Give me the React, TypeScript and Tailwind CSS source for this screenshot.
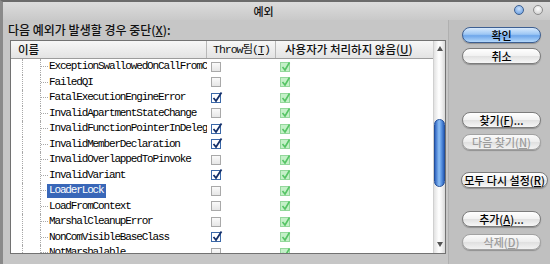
import React from "react"

const rows: [string, boolean][] = [
  ["ExceptionSwallowedOnCallFromCom", false],
  ["FailedQI", false],
  ["FatalExecutionEngineError", true],
  ["InvalidApartmentStateChange", false],
  ["InvalidFunctionPointerInDelegate", true],
  ["InvalidMemberDeclaration", true],
  ["InvalidOverlappedToPinvoke", false],
  ["InvalidVariant", true],
  ["LoaderLock", false],
  ["LoadFromContext", false],
  ["MarshalCleanupError", false],
  ["NonComVisibleBaseClass", true],
  ["NotMarshalable", false],
]

const ko = { fontFamily: '"Noto Sans CJK KR", "Noto Sans", sans-serif' }
const mono = { fontFamily: '"Liberation Mono", "Noto Sans CJK KR", monospace' }

function ThrowBox({ checked }: { checked: boolean }) {
  if (!checked)
    return <div className="w-[10px] h-[10px] border border-[#a9a9a9] bg-[linear-gradient(to_bottom,#fafafa,#e6e6e6)]" />
  return (
    <div className="relative w-[10px] h-[10px] border border-[#3b68a8] bg-white">
      <svg className="absolute -top-[3px] left-0" width="11" height="12" viewBox="0 0 11 12">
        <path d="M1.5 7 L4 10 L9.5 1.5" fill="none" stroke="#14306b" strokeWidth="1.8" />
      </svg>
    </div>
  )
}

function GreenBox() {
  return (
    <div className="relative w-[10px] h-[10px] border border-[#94d89c] bg-[#c4f0c8]">
      <svg className="absolute -top-[2px] left-0" width="10" height="11" viewBox="0 0 10 11">
        <path d="M1.5 6 L4 9 L8.5 1.5" fill="none" stroke="#56c465" strokeWidth="1.6" />
      </svg>
    </div>
  )
}

function AquaButton({ label, variant = "normal", wide = false }: { label: React.ReactNode; variant?: "default" | "normal" | "disabled"; wide?: boolean }) {
  const base = "h-[16px] rounded-full flex items-center justify-center text-[11px] font-medium leading-none border shadow-[0_1px_1px_rgba(0,0,0,0.25)]"
  const v =
    variant === "default"
      ? "border-[#3d5f92] bg-[linear-gradient(to_bottom,#d9eafc,#9cc6f4_45%,#6ea6ea_55%,#b4d8fb)] text-black"
      : variant === "disabled"
        ? "border-[#a2a2a2] bg-[linear-gradient(to_bottom,#fbfbfb,#ececec_50%,#e0e0e0_52%,#f2f2f2)] text-[#9c9c9c]"
        : "border-[#7c7c7c] bg-[linear-gradient(to_bottom,#ffffff,#f1f1f1_50%,#e1e1e1_52%,#f7f7f7)] text-black"
  return (
    <div className={`${base} ${v} ${wide ? "w-[87px]" : "w-[79px]"}`} style={ko}>
      {label}
    </div>
  )
}

function U({ c }: { c: string }) {
  return <span className="underline underline-offset-1">{c}</span>
}

export default function App() {
  return (
    <div className="w-[550px] h-[264px] overflow-hidden flex flex-col bg-[#c6c6c6] border-l-[3px] border-[#8a8a8a] border-t-2 border-t-[#6b6b6b]">
      <div className="h-[18px] shrink-0 flex items-center bg-[linear-gradient(to_bottom,#dcdcdc,#c9c9c9)]">
        <div className="flex-1 text-center text-[11px] font-medium pl-[10px] text-[#111]" style={ko}>예외</div>
        <div className="flex gap-[9px] pr-[7px] -mt-[2px]">
          <div className="w-[10px] h-[10px] rounded-full border border-[#3c5f90] bg-[radial-gradient(circle_at_50%_35%,#c9e0fb,#5d95dc)]" />
          <div className="w-[10px] h-[10px] rounded-full border border-[#8c8c8c] bg-[radial-gradient(circle_at_50%_35%,#ffffff,#c8c8c8)]" />
        </div>
      </div>
      <div className="flex flex-1 min-h-0">
        <div className="flex flex-col w-[445px] shrink-0">
          <div className="h-[20px] pl-[5px] flex items-center text-[12px] font-medium text-[#111]" style={ko}>
            다음 예외가 발생할 경우 중단(<U c="X" />):
          </div>
          <div className="ml-[7px] w-[436px] h-[214px] border border-[#727272] bg-white flex overflow-hidden">
            <div className="w-[422px] flex flex-col">
              <div className="h-[18px] shrink-0 flex border-b border-[#9c9c9c] bg-[linear-gradient(to_bottom,#f7f7f7,#e3e3e3)] text-[11.5px] text-[#111]">
                <div className="w-[196px] pl-[7px] flex items-center font-medium border-r border-[#b8b8b8]" style={ko}>이름</div>
                <div className="w-[69px] pl-[6px] flex items-center border-r border-[#b8b8b8] tracking-[-1px]" style={mono}>
                  Throw됨(<U c="T" />)
                </div>
                <div className="flex-1 pl-[9px] flex items-center font-medium" style={ko}>
                  사용자가 처리하지 않음(<U c="U" />)
                </div>
              </div>
              {rows.map(([name, thr]) => (
                <div key={name} className="h-[15.5px] shrink-0 flex">
                  <div className="w-[196px] flex overflow-hidden">
                    <div className="w-[11px] shrink-0" />
                    <div className="w-[18px] shrink-0 border-l border-dotted border-[#a8a8a8]" />
                    <div className="w-[9px] shrink-0 border-l border-dotted border-[#a8a8a8] flex items-center">
                      <div className="w-[7px] border-t border-dotted border-[#a8a8a8]" />
                    </div>
                    <div
                      className={`whitespace-nowrap flex items-center text-[11px] tracking-[-1.15px] leading-none ${
                        name === "LoaderLock" ? "bg-[#3967b8] text-white px-[2px] -ml-[2px] my-[1px]" : "text-black"
                      }`}
                      style={mono}
                    >
                      {name}
                    </div>
                  </div>
                  <div className="w-[69px] pl-[4px] flex items-center">
                    <ThrowBox checked={thr} />
                  </div>
                  <div className="flex-1 pl-[4px] flex items-center">
                    <GreenBox />
                  </div>
                </div>
              ))}
            </div>
            <div className="w-[12px] relative bg-[linear-gradient(to_right,#e2e2e2,#ffffff_45%,#f2f2f2_70%,#d8d8d8)] border-l border-[#d0d0d0]">
              <div className="absolute top-[5px] left-[3px] w-0 h-0 border-l-[3px] border-r-[3px] border-b-[5px] border-l-transparent border-r-transparent border-b-[#555]" />
              <div className="absolute top-[78px] left-[0px] w-[11px] h-[68px] rounded-full border border-[#24509a] bg-[linear-gradient(to_right,#2e63c0,#8ec0f5_45%,#5d97e4_70%,#2a5fb9)]" />
              <div className="absolute bottom-[6px] left-[3px] w-0 h-0 border-l-[3px] border-r-[3px] border-t-[5px] border-l-transparent border-r-transparent border-t-[#555]" />
            </div>
          </div>
        </div>
        <div className="flex-1 flex flex-col pl-[13px] bg-[#c0c0c0] border-l border-[#b0b0b0]">
          <div className="mt-[7px]"><AquaButton variant="default" label="확인" /></div>
          <div className="mt-[5px]"><AquaButton label="취소" /></div>
          <div className="mt-[48px]"><AquaButton label={<>찾기(<U c="F" />)...</>} /></div>
          <div className="mt-[6px]"><AquaButton variant="disabled" label={<>다음 찾기(<U c="N" />)</>} /></div>
          <div className="mt-[22px] -ml-[1px]"><AquaButton wide label={<>모두 다시 설정(<U c="R" />)</>} /></div>
          <div className="mt-[23px]"><AquaButton label={<>추가(<U c="A" />)...</>} /></div>
          <div className="mt-[7px]"><AquaButton variant="disabled" label={<>삭제(<U c="D" />)</>} /></div>
        </div>
      </div>
    </div>
  )
}
